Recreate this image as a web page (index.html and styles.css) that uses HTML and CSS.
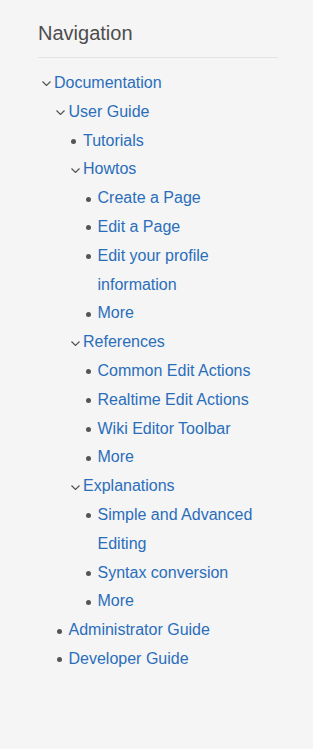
FILE: index.html
```html
<!DOCTYPE html>
<html lang="en">
<head>
<meta charset="utf-8">
<title>Navigation</title>
<link rel="stylesheet" href="styles.css">
</head>
<body>
<nav class="panel">
  <h2 class="panel-title">Navigation</h2>
  <ul class="tree">
    <li class="node open"><span class="mark"><svg class="chev" viewBox="0 0 9 5" width="9" height="5"><path d="M0.5 0.5 L4.5 4.5 L8.5 0.5" /></svg></span><div class="body"><a href="#">Documentation</a>
      <ul class="tree">
        <li class="node open"><span class="mark"><svg class="chev" viewBox="0 0 9 5" width="9" height="5"><path d="M0.5 0.5 L4.5 4.5 L8.5 0.5" /></svg></span><div class="body"><a href="#">User Guide</a>
          <ul class="tree">
            <li class="node"><span class="mark"><span class="dot"></span></span><div class="body"><a href="#">Tutorials</a></div></li>
            <li class="node open"><span class="mark"><svg class="chev" viewBox="0 0 9 5" width="9" height="5"><path d="M0.5 0.5 L4.5 4.5 L8.5 0.5" /></svg></span><div class="body"><a href="#">Howtos</a>
              <ul class="tree">
                <li class="node"><span class="mark"><span class="dot"></span></span><div class="body"><a href="#">Create a Page</a></div></li>
                <li class="node"><span class="mark"><span class="dot"></span></span><div class="body"><a href="#">Edit a Page</a></div></li>
                <li class="node"><span class="mark"><span class="dot"></span></span><div class="body"><a href="#">Edit your profile information</a></div></li>
                <li class="node"><span class="mark"><span class="dot"></span></span><div class="body"><a href="#">More</a></div></li>
              </ul>
            </div></li>
            <li class="node open"><span class="mark"><svg class="chev" viewBox="0 0 9 5" width="9" height="5"><path d="M0.5 0.5 L4.5 4.5 L8.5 0.5" /></svg></span><div class="body"><a href="#">References</a>
              <ul class="tree">
                <li class="node"><span class="mark"><span class="dot"></span></span><div class="body"><a href="#">Common Edit Actions</a></div></li>
                <li class="node"><span class="mark"><span class="dot"></span></span><div class="body"><a href="#">Realtime Edit Actions</a></div></li>
                <li class="node"><span class="mark"><span class="dot"></span></span><div class="body"><a href="#">Wiki Editor Toolbar</a></div></li>
                <li class="node"><span class="mark"><span class="dot"></span></span><div class="body"><a href="#">More</a></div></li>
              </ul>
            </div></li>
            <li class="node open"><span class="mark"><svg class="chev" viewBox="0 0 9 5" width="9" height="5"><path d="M0.5 0.5 L4.5 4.5 L8.5 0.5" /></svg></span><div class="body"><a href="#">Explanations</a>
              <ul class="tree">
                <li class="node"><span class="mark"><span class="dot"></span></span><div class="body"><a href="#">Simple and Advanced Editing</a></div></li>
                <li class="node"><span class="mark"><span class="dot"></span></span><div class="body"><a href="#">Syntax conversion</a></div></li>
                <li class="node"><span class="mark"><span class="dot"></span></span><div class="body"><a href="#">More</a></div></li>
              </ul>
            </div></li>
          </ul>
        </div></li>
        <li class="node"><span class="mark"><span class="dot"></span></span><div class="body"><a href="#">Administrator Guide</a></div></li>
        <li class="node"><span class="mark"><span class="dot"></span></span><div class="body"><a href="#">Developer Guide</a></div></li>
      </ul>
    </div></li>
  </ul>
</nav>
</body>
</html>
```
FILE: styles.css
```css
html, body {
  margin: 0;
  padding: 0;
  background: #f5f5f5;
}
body {
  font-family: "Liberation Sans", Arial, sans-serif;
  font-size: 16px;
  color: #333;
  min-height: 749px;
}
.panel {
  padding: 22px 35px 0 38px;
}
.panel-title {
  margin: 0;
  font-size: 20px;
  font-weight: normal;
  line-height: 22px;
  color: #4d4d4d;
  padding-bottom: 13px;
  border-bottom: 1px solid #e3e3e3;
}
.panel > .tree {
  margin-top: 11px;
  margin-left: 1.5px;
}
.tree {
  list-style: none;
  margin: 0;
  padding: 0;
}
.node {
  display: flex;
  align-items: flex-start;
  line-height: 28.8px;
}
.mark {
  flex: 0 0 14.5px;
  height: 28.8px;
  display: flex;
  align-items: center;
}
.chev {
  display: block;
  margin-left: 2px;
  margin-top: 1px;
  fill: none;
  stroke: #555;
  stroke-width: 1.2;
}
.dot {
  display: block;
  width: 5px;
  height: 5px;
  border-radius: 50%;
  background: #555;
  margin-left: 2.5px;
  margin-top: 1px;
}
.body {
  flex: 1;
  min-width: 0;
}
.body a {
  color: #2a6ebb;
  text-decoration: none;
}
```
